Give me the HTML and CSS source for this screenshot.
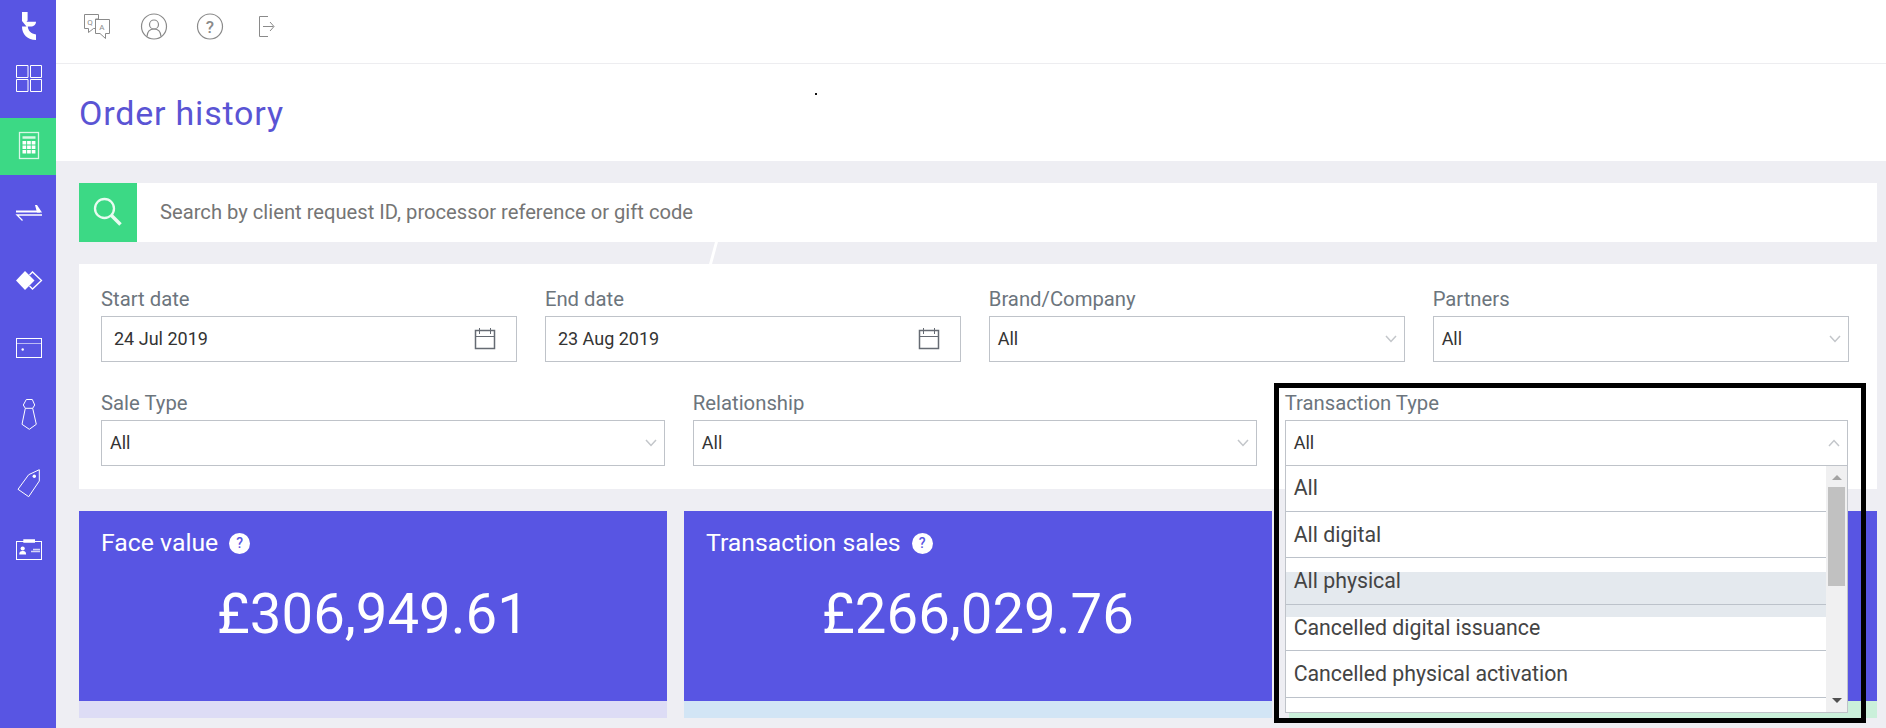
FILE: index.html
```html
<!DOCTYPE html>
<html lang="en">
<head>
    <meta charset="UTF-8">
    <meta name="viewport" content="width=device-width, initial-scale=1.0">
    <title>Order history</title>
    <link rel="stylesheet" href="styles.css">
</head>
<body>
    <nav class="sidebar">
        <a class="logo" href="#">
            <svg width="14" height="28" viewBox="0 0 14 28"><path d="M0 0h5.600v8.500L4.500 9.700H14c0 3-2.300 4.800-5.300 4.800H5.800C6 18.500 9 22 14 22.400V28C5.500 28 0 22.500 0 14.500h4.500L0 9z" fill="#fff"/></svg>
        </a>
        <a class="nav-item" href="#">
            <svg width="30" height="34" fill="none" stroke="#fff"><path d="M2.500 3.500h11.500v12H2.500zM16.500 3.500h11v12h-11zM2.500 17.500h11.500v12H2.500zM16.500 17.500h11v12h-11z"/></svg>
        </a>
        <a class="nav-item active" href="#">
            <svg width="30" height="34" fill="none" stroke="#d6f8e5"><rect x="5.500" y="3.500" width="19" height="26" stroke-width="1.300"/><path d="M8.500 8.500h13" stroke-width="2.500"/><path d="M8.500 13.700h13M8.500 18.200h13M8.500 22.700h13" stroke="#fff" stroke-width="3.400" stroke-dasharray="3.700 .9"/></svg>
        </a>
        <a class="nav-item" href="#">
            <svg width="30" height="34" fill="none" stroke="#fff"><path d="M2 14.500h24" stroke-width="2"/><path d="M21 8h2l5 7.500h-5z" fill="#fff" stroke="none"/><path d="M28 18H3l5.500 5.500" stroke-width="1.300"/></svg>
        </a>
        <a class="nav-item" href="#">
            <svg width="30" height="34" fill="none" stroke="#fff"><path d="M11 7l9.500 9.500L11 26l-9-9.500z" fill="#fff" stroke="none"/><path d="M15.500 11l3-3 9 8.500-9 8.500-3-3" stroke-width="1.300"/></svg>
        </a>
        <a class="nav-item" href="#">
            <svg width="30" height="34" fill="none" stroke="#fff"><rect x="2.500" y="7.500" width="25" height="19"/><path d="M3 12.500h24" stroke-opacity=".6"/><circle cx="8.700" cy="18.500" r="1.200" fill="#fff" stroke="none"/></svg>
        </a>
        <a class="nav-item" href="#">
            <svg width="30" height="34" fill="none" stroke="#fff"><path d="M12.300 1.500h6l2.400 5.500-2 3.300h-7.400L9.300 7zM11.300 10.300L8 26.300l7.300 5 7-5-3.600-16"/></svg>
        </a>
        <a class="nav-item" href="#">
            <svg width="30" height="34" fill="none" stroke="#fff"><path d="M14.700 8.700l10.600-5V15L14.700 30.700 4 23.300z"/><circle cx="20.300" cy="10.300" r="1.700" fill="#fff" stroke="none"/></svg>
        </a>
        <a class="nav-item" href="#">
            <svg width="30" height="34" fill="none" stroke="#fff"><rect x="2.500" y="8.500" width="25" height="18"/><path d="M9.300 6.200H21v3.500H9.300zM5.300 21.500c0-3 1.500-3.500 3.400-3.500s3.400.5 3.400 3.500z" fill="#fff" stroke="none"/><circle cx="8.700" cy="15.500" r="2.100" fill="#fff" stroke="none"/><path d="M19 16.500h7M17 18.500h9" stroke-width="1.500" stroke-opacity=".75"/></svg>
        </a>
    </nav>

    <div class="page">
        <header class="topbar">
            <svg width="28" height="29" fill="none" stroke="#8a8a8a"><path d="M12.500 14.500V7h3V2.500h-14v14h4V20.500l5-4h2M12.500 7.500h14v14h-4v5l-5.500-5h-4.500z"/><text x="4.300" y="12.500">Q</text><text x="16.200" y="18">A</text></svg>
            <svg width="28" height="29" fill="none" stroke="#8a8a8a" stroke-width="1.200"><circle cx="14" cy="14.500" r="12.500"/><circle cx="14" cy="12.500" r="4.500"/><path d="M7 24.500c.3-5 3-7.500 7-7.500s6.700 2.500 7 7.500"/></svg>
            <svg width="28" height="29" fill="none" stroke="#8a8a8a" stroke-width="1.200"><circle cx="14" cy="14.500" r="12.500"/><text class="help" x="9.700" y="20.500">?</text></svg>
            <svg class="exit" width="18" height="29" fill="none" stroke="#8a8a8a"><path d="M10 4.500H1.500v20H10M5 14.500h10.500M12 10l4 4.500-4 4.500"/></svg>
        </header>

        <div class="title">
            <h1>Order history</h1>
            <span class="speck"></span>
        </div>

        <main class="content">
            <div class="search">
                <button class="search-btn">
                    <svg width="30" height="30" fill="none" stroke="#e9fbf1"><circle cx="11.500" cy="11.500" r="9.500" stroke-width="2.300"/><path d="M18.500 18.500l9 9" stroke-width="3.500"/></svg>
                </button>
                <input type="text" placeholder="Search by client request ID, processor reference or gift code">
            </div>

            <section class="filters">
                <div class="row four">
                    <div class="field">
                        <label>Start date</label>
                        <div class="box date">24 Jul 2019
                            <svg width="22" height="24" fill="none" stroke="#666b73"><path d="M1.500 3.500h19v18h-19z" stroke-width="1.500"/><path d="M1 9.500h20M5.500 1v6M16.500 1v6"/></svg>
                        </div>
                    </div>
                    <div class="field">
                        <label>End date</label>
                        <div class="box date">23 Aug 2019
                            <svg width="22" height="24" fill="none" stroke="#666b73"><path d="M1.500 3.500h19v18h-19z" stroke-width="1.500"/><path d="M1 9.500h20M5.500 1v6M16.500 1v6"/></svg>
                        </div>
                    </div>
                    <div class="field">
                        <label>Brand/Company</label>
                        <div class="box">All
                            <svg width="12" height="8" fill="none" stroke="#c3c6ca" stroke-width="1.500"><path d="M1 1l5 5.500L11 1"/></svg>
                        </div>
                    </div>
                    <div class="field">
                        <label>Partners</label>
                        <div class="box">All
                            <svg width="12" height="8" fill="none" stroke="#c3c6ca" stroke-width="1.500"><path d="M1 1l5 5.500L11 1"/></svg>
                        </div>
                    </div>
                </div>
                <div class="row three">
                    <div class="field">
                        <label>Sale Type</label>
                        <div class="box">All
                            <svg width="12" height="8" fill="none" stroke="#c3c6ca" stroke-width="1.500"><path d="M1 1l5 5.500L11 1"/></svg>
                        </div>
                    </div>
                    <div class="field">
                        <label>Relationship</label>
                        <div class="box">All
                            <svg width="12" height="8" fill="none" stroke="#c3c6ca" stroke-width="1.500"><path d="M1 1l5 5.500L11 1"/></svg>
                        </div>
                    </div>
                    <div class="field open">
                        <label>Transaction Type</label>
                        <div class="box">All
                            <svg width="12" height="8" fill="none" stroke="#c3c6ca" stroke-width="1.500"><path d="M1 7l5-5.500L11 7"/></svg>
                        </div>
                        <div class="dropdown">
                            <span class="hover-bar"></span>
                            <ul>
                                <li>All</li>
                                <li>All digital</li>
                                <li>All physical</li>
                                <li>Cancelled digital issuance</li>
                                <li>Cancelled physical activation</li>
                            </ul>
                            <div class="scrollbar">
                                <span class="arrow up"></span>
                                <span class="thumb"></span>
                                <span class="arrow down"></span>
                            </div>
                        </div>
                        <span class="frame"></span>
                    </div>
                </div>
            </section>

            <section class="cards">
                <div class="card lilac">
                    <h2>Face value <span class="tip">?</span></h2>
                    <p>£306,949.61</p>
                </div>
                <div class="card sky">
                    <h2>Transaction sales <span class="tip">?</span></h2>
                    <p>£266,029.76</p>
                </div>
                <div class="card mint"></div>
            </section>
        </main>
    </div>
</body>
</html>
```
FILE: styles.css
```css
* {
    box-sizing: border-box;
}

body {
    margin: 0;
    height: 728px;
    display: flex;
    overflow: hidden;
    background: #eeeef3;
    font-family: Roboto, sans-serif;
    color: #333;
}

svg {
    display: block;
    flex: none;
}

/* Sidebar */
.sidebar {
    width: 56px;
    height: 728px;
    flex: none;
    background: #5855e3;
}

.logo {
    display: block;
    height: 50.5px;
    padding: 12px 0 0 22px;
}

.nav-item {
    display: flex;
    align-items: center;
    height: 57px;
    padding-left: 14px;
    margin-bottom: 10.3px;
}

.nav-item.active {
    background: #3cd985;
}

.page {
    flex: 1;
}

/* Top bar */
.topbar {
    display: flex;
    gap: 28.5px;
    height: 64px;
    padding: 12px 0 0 27px;
    background: #fff;
    border-bottom: 1px solid #ededf0;
}

.topbar text {
    font-size: 8px;
    fill: #8a8a8a;
    stroke: none;
}

.topbar .help {
    font-size: 17px;
    font-weight: 500;
}

.topbar .exit {
    margin-left: 5px;
}

.title {
    position: relative;
    height: 97px;
    padding: 27px 0 0 23px;
    background: #fff;
}

.title h1 {
    margin: 0;
    font-size: 34px;
    font-weight: 400;
    line-height: 44px;
    letter-spacing: 0.8px;
    color: #5a54d4;
}

.speck {
    position: absolute;
    left: 759px;
    top: 29px;
    width: 2px;
    height: 2px;
    background: #111;
}

.content {
    padding: 22px 9px 0 23px;
}

/* Search */
.search {
    position: relative;
    display: flex;
    height: 59px;
    margin-bottom: 22px;
    background: #fff;
}

.search::after {
    content: '';
    position: absolute;
    left: 633px;
    top: 59px;
    width: 3px;
    height: 22px;
    background: #fff;
    transform: skewX(-15deg);
}

.search-btn {
    width: 58px;
    padding: 0 0 2px 14px;
    border: 0;
    background: #3cd985;
}

.search input {
    flex: 1;
    padding: 0 23px 2px;
    border: 0;
    background: none;
    font: 20.2px Roboto, sans-serif;
}

.search input::placeholder {
    color: #757575;
}

/* Filters */
.filters {
    height: 225px;
    padding: 22px 28.5px 0 22px;
    margin-bottom: 22px;
    background: #fff;
}

.row {
    display: grid;
    column-gap: 28px;
    height: 104px;
}

.four {
    grid-template-columns: repeat(4, 1fr);
}

.three {
    grid-template-columns: repeat(3, 1fr);
}

.field {
    position: relative;
}

.field label {
    display: block;
    height: 30px;
    font-size: 20.3px;
    line-height: 26px;
    color: #6c757d;
}

.box {
    display: flex;
    align-items: center;
    justify-content: space-between;
    height: 46px;
    padding: 0 7px 1px 8px;
    border: 1px solid #bfc3c9;
    font-size: 18px;
}

.box.date {
    padding: 0 20px 1px 12px;
}

/* Open select */
.dropdown {
    position: absolute;
    z-index: 2;
    left: 0;
    top: 75px;
    width: 100%;
    height: 248px;
    display: flex;
    background: #fff;
    border: 1px solid #bfc3c9;
    isolation: isolate;
    overflow: hidden;
}

.dropdown ul {
    flex: 1;
    margin: -0.6px 0 0;
    padding: 0;
    list-style: none;
}

.dropdown li {
    height: 46.5px;
    padding-left: 8px;
    border-bottom: 1px solid #bcc2ca;
    font-size: 21.3px;
    line-height: 46px;
    color: #444;
}

.hover-bar {
    position: absolute;
    z-index: -1;
    left: 0;
    right: 0;
    top: 106px;
    height: 45px;
    background: #e4e9ee;
}

.scrollbar {
    display: flex;
    flex-direction: column;
    align-items: center;
    width: 21px;
    padding: 9px 0;
    background: #f0f0f1;
}

.thumb {
    width: 17px;
    height: 99px;
    margin: 7px 0 auto;
    background: #c1c1c1;
}

.arrow {
    border: 5px solid transparent;
}

.arrow.up {
    border-top: 0;
    border-bottom-color: #a3a3a3;
}

.arrow.down {
    border-bottom: 0;
    border-top-color: #505050;
}

.frame {
    position: absolute;
    z-index: 3;
    left: -11px;
    top: -7px;
    width: 592px;
    height: 340px;
    border: 5px solid #000;
}

/* Totals */
.cards {
    display: grid;
    grid-template-columns: repeat(3, 1fr);
    column-gap: 17px;
}

.card {
    height: 207px;
    padding: 16px 22px;
    background: #5855e3;
    border-bottom: 17px solid;
    color: #fff;
}

.card h2 {
    display: flex;
    align-items: center;
    margin: 0;
    font-size: 24.8px;
    font-weight: 400;
    line-height: 32px;
}

.card p {
    margin: 22px 0 0;
    font-size: 56.3px;
    line-height: 66px;
    text-align: center;
}

.tip {
    width: 21px;
    height: 21px;
    margin-left: 11px;
    border-radius: 50%;
    background: #fff;
    font-size: 14px;
    font-weight: 500;
    line-height: 21px;
    text-align: center;
    color: #5855e3;
}

.lilac {
    border-color: #dddcf5;
}

.sky {
    border-color: #d2e5f5;
}

.mint {
    border-color: #caf0da;
}
```
